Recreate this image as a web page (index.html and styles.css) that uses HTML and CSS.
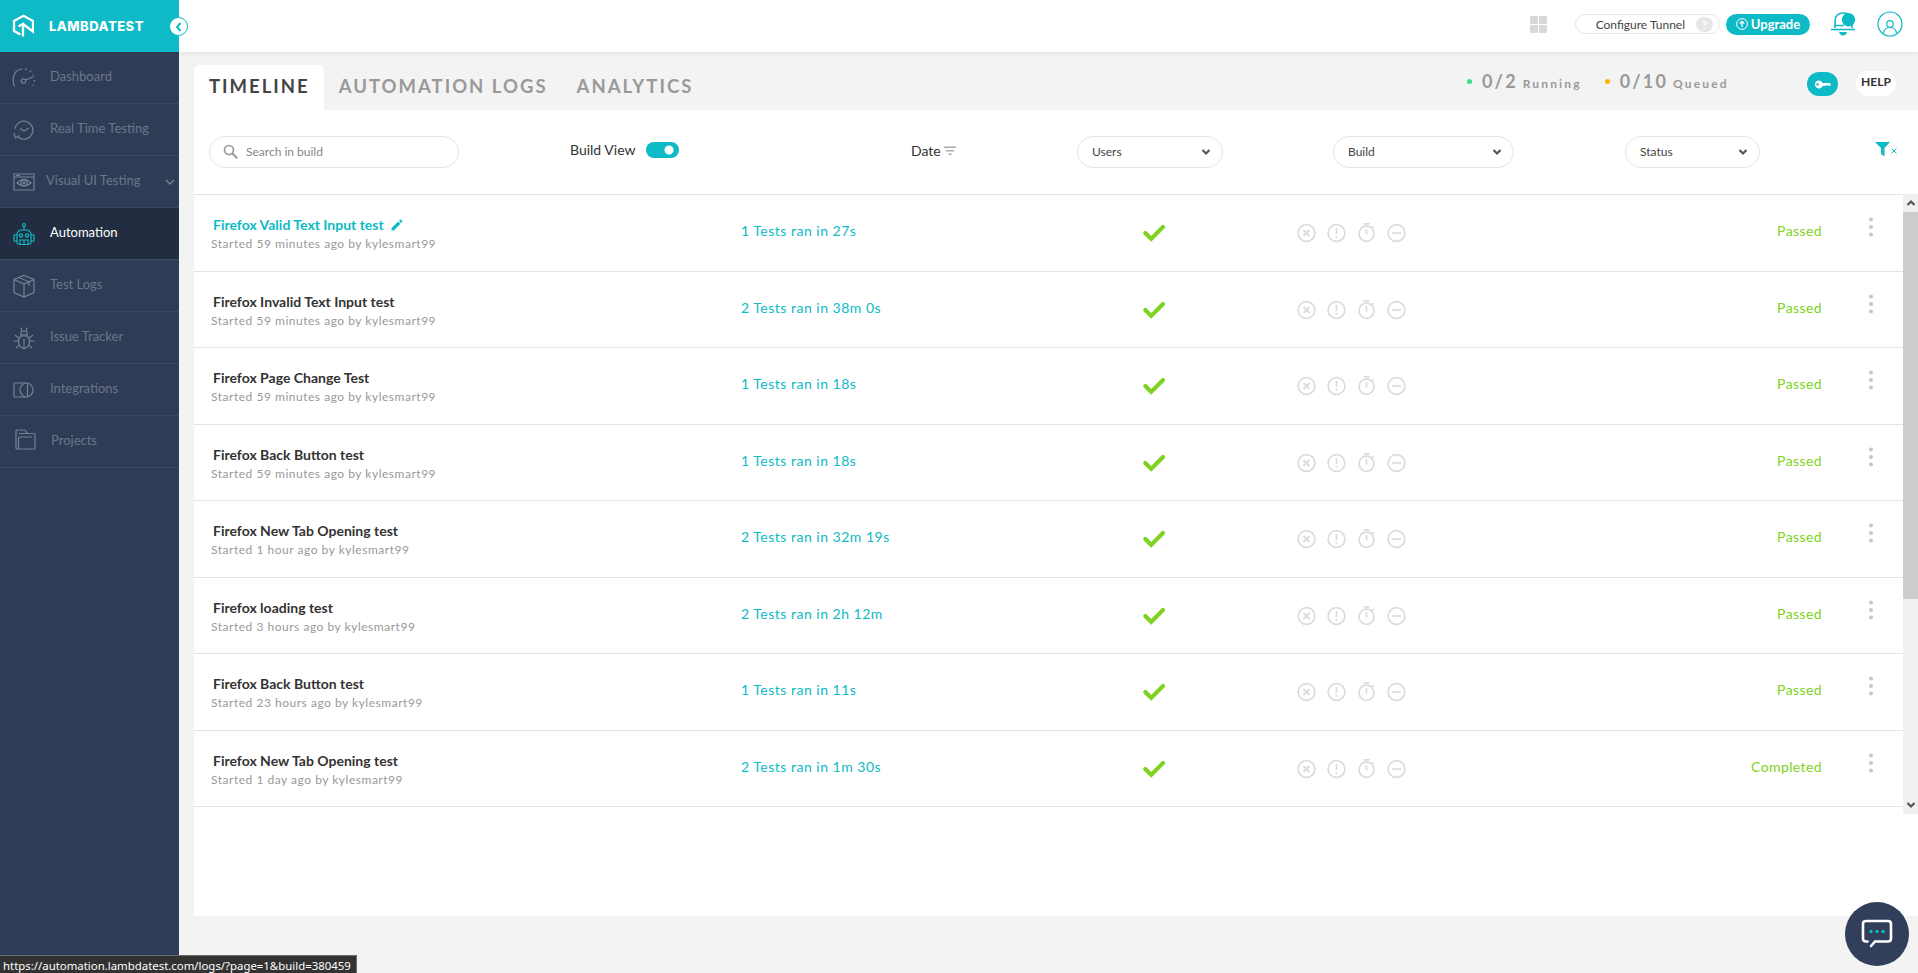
FILE: index.html
```html
<!DOCTYPE html>
<html lang="en">
<head>
<meta charset="utf-8">
<title>Automation Timeline</title>
<link rel="stylesheet" href="styles.css">
</head>
<body>
<svg class="defs" width="0" height="0">
  <symbol id="check" viewBox="0 0 24 20"><path d="M3.300 10l5.900 5.900L21 4.100" fill="none" stroke="#7ed321" stroke-width="4.200" stroke-linecap="round"/></symbol>
  <symbol id="states" viewBox="0 0 110 24"><g fill="none" stroke="#dcdcdc" stroke-width="1.700">
    <circle cx="9.500" cy="13" r="8.400"/><path d="M6.500 10l6 6m0-6l-6 6" stroke-width="2"/>
    <circle cx="39.500" cy="13" r="8.400"/><path d="M39.500 8v6m0 1.700v2"/>
    <ellipse cx="69.500" cy="13.800" rx="7.500" ry="7.600"/><path d="M69.500 9v5.500M66.500 3.800h6M74.500 7.500l2.500-1"/>
    <circle cx="99.500" cy="13" r="8.400"/><path d="M95 13h9"/></g></symbol>
  <symbol id="dots" viewBox="0 0 6 20"><g fill="#c8c8c8"><circle cx="3" cy="2.500" r="2.100"/><circle cx="3" cy="10" r="2.100"/><circle cx="3" cy="17.500" r="2.100"/></g></symbol>
  <symbol id="chev" viewBox="0 0 10 8"><path d="M1.500 2L5 5.500 8.500 2" fill="none" stroke="#555" stroke-width="2.200"/></symbol>
</svg>
<div class="app">
  <aside class="sidebar">
    <div class="brand">
      <svg width="22" height="24" viewBox="0 0 22 24" fill="none" stroke="#fff" stroke-width="2.300"><path d="M8.500 20.500L2 17V7L11.500 1.800 21 7v10.500L11 10M6.500 12.500L11 10v12.500"/></svg>
      <span>LAMBDATEST</span>
      <div class="collapse"><svg width="10" height="12" viewBox="0 0 10 12"><path d="M6.500 2L3 6l3.500 4" fill="none" stroke="#0ebac5" stroke-width="2"/></svg></div>
    </div>
    <nav>
      <a class="item"><svg width="24" height="24" viewBox="0 0 24 24"><path d="M2.500 20.500C-1 11 3 3 10.500 3" /><circle cx="11.500" cy="15" r="2.200"/><path d="M13.500 14L22 10.500"/><path d="M13 3.200c4 .5 7 3 8.500 6M22.500 14c0 2-.5 4-1.500 6" stroke-dasharray="2 2.800"/></svg><span>Dashboard</span></a>
      <a class="item"><svg width="24" height="24" viewBox="0 0 24 24"><path d="M3 11a9 9 0 1 1 3 8M2 15l1.500 5 4-2.500M8 10.500l4 2.500 5-3"/></svg><span>Real Time Testing</span></a>
      <a class="item visual"><svg width="24" height="24" viewBox="0 0 24 24"><path d="M2 4h20v16H2zM2 7h20M4 5.500h4M5 13q7-7 14 0q-7 6-14 0z"/><circle cx="12" cy="13" r="3"/><circle cx="12" cy="13" r=".8"/></svg><span>Visual UI Testing</span><svg class="more" width="10" height="8" viewBox="0 0 10 8"><path d="M1 2l4 4 4-4"/></svg></a>
      <a class="item active"><svg width="24" height="24" viewBox="0 0 24 24"><circle cx="12" cy="3" r="1.500"/><path d="M12 4.500V8M5 21V12q1-4 5-4h4q4 0 5 4v9q-1 1.500-3 1.500H8Q6 22.500 5 21zM5 13H2v6h3M19 13h3v6h-3M8 22v-4h8v4M12 18v4"/><circle cx="9" cy="13.500" r="1.600"/><circle cx="15" cy="13.500" r="1.600"/></svg><span>Automation</span></a>
      <a class="item"><svg width="24" height="24" viewBox="0 0 24 24"><path d="M12 1.500L22 5.500v13L12 23 2 18.500v-13zM2 5.500L12 10l10-4.500M12 10v13M7 3.500l10 4.300v4"/></svg><span>Test Logs</span></a>
      <a class="item"><svg width="24" height="24" viewBox="0 0 24 24"><ellipse cx="12" cy="15.500" rx="5.500" ry="7"/><path d="M12 13v9.500M9 9Q8 5 12 5t3 4M10 5L9 1.500M14 5l1-3.500M6.500 12L3 9M17.500 12L21 9M6.500 15H1.500M17.500 15h5M7.500 19L4 22M16.500 19l3.500 3M8 10h8"/></svg><span>Issue Tracker</span></a>
      <a class="item"><svg width="24" height="24" viewBox="0 0 24 24"><path d="M14 5H3q-1 0-1 1v12q0 1 1 1h11"/><ellipse cx="14.500" cy="12" rx="6.500" ry="7"/><path d="M15.500 5v14"/></svg><span>Integrations</span></a>
      <a class="item projects"><svg width="24" height="24" viewBox="0 0 24 24"><path d="M5.500 21H4q-1 0-1-1V3q0-1 1-1h7q2 0 3 3.500h7q1 0 1 1V20q0 1-1 1H5.500V10.500q0-1.500 1.500-1.500h12M6 5.500h8"/></svg><span>Projects</span></a>
    </nav>
  </aside>
  <div class="page">
    <header class="topbar">
      <svg class="grid" width="17" height="17" viewBox="0 0 17 17" fill="#d8d8d8"><rect width="8" height="8" rx="1"/><rect x="9" width="8" height="8" rx="1"/><rect y="9" width="8" height="8" rx="1"/><rect x="9" y="9" width="8" height="8" rx="1"/></svg>
      <div class="tunnel"><span>Configure Tunnel</span><b>?</b></div>
      <div class="upgrade"><svg width="12" height="12" viewBox="0 0 12 12" fill="none" stroke="#fff"><circle cx="6" cy="6" r="5.400"/><path d="M6 9V3.500M3.800 5.500L6 3.300l2.200 2.200" stroke-width="1.300"/></svg>Upgrade</div>
      <svg class="bell" width="26" height="26" viewBox="0 0 26 26"><path d="M5 17V10q0-8 9-8 8 0 8 8v7M5 14.500h9M1 18.500h24" fill="none" stroke="#0ebac5" stroke-width="1.600"/><circle cx="18.500" cy="8.800" r="6.700" fill="#0ebac5"/><path d="M9 21h8q-1 3.500-4 3.500T9 21z" fill="#0ebac5"/></svg>
      <svg class="user" width="26" height="26" viewBox="0 0 26 26" fill="none" stroke="#0ebac5" stroke-width="1.200"><circle cx="13" cy="13" r="12"/><circle cx="13" cy="13" r="3.300"/><path d="M6.500 22.500q.5-6 6.500-6t6.500 6"/></svg>
    </header>
    <div class="tabs">
      <a class="tab current">TIMELINE</a><a class="tab">AUTOMATION LOGS</a><a class="tab">ANALYTICS</a>
      <div class="usage"><i class="green"></i><strong>0/2</strong><em>Running</em><i class="amber"></i><strong>0/10</strong><em>Queued</em></div>
      <div class="key"><svg width="16" height="9" viewBox="0 0 16 9"><path fill-rule="evenodd" fill="#fff" d="M4 .5a4 4 0 1 0 3.600 5.500H10l1-1 1 1 1-1 1 1h1l.8-1.500-.8-1.500H7.600A4 4 0 0 0 4 .5zM2.600 3.300a1.200 1.200 0 1 1 0 2.400 1.200 1.200 0 0 1 0-2.400z"/></svg></div>
      <div class="help">HELP</div>
    </div>
    <main class="panel">
      <div class="filters">
        <div class="search"><svg width="16" height="16" viewBox="0 0 16 16" fill="none" stroke="#999" stroke-width="1.700"><circle cx="6" cy="6" r="4.500"/><path d="M9.200 9.200l5 5" stroke-width="2"/></svg><span>Search in build</span></div>
        <div class="view"><span>Build View</span><div class="toggle"></div></div>
        <div class="date"><span>Date</span><svg width="12" height="9" viewBox="0 0 12 9" fill="#aaa"><path d="M0 .5h12V2H0zM2 4h8v1.500H2zM4.500 7.500h3V9h-3z"/></svg></div>
        <div class="select users">Users<svg width="10" height="8"><use href="#chev"/></svg></div>
        <div class="select build">Build<svg width="10" height="8"><use href="#chev"/></svg></div>
        <div class="select status">Status<svg width="10" height="8"><use href="#chev"/></svg></div>
        <svg class="clear" width="24" height="15" viewBox="0 0 24 15"><path d="M0 0h15L9.500 6v8.500L6 12V6z" fill="#0ebac5"/><path d="M16.500 6.500l5 5m0-5l-5 5" stroke="#0ebac5"/></svg>
      </div>
      <div class="list">
        <div class="rows">
          <div class="row"><div class="name"><b class="hover">Firefox Valid Text Input test<svg width="12" height="12" viewBox="0 0 12 12" fill="#0ebac5"><path d="M.5 9.200L7.200 2.500l2.300 2.300L2.800 11.500H.5zM8 1.700L9.500.3l2.200 2.200-1.400 1.500z"/></svg></b><small>Started 59 minutes ago by kylesmart99</small></div><span class="ran">1 Tests ran in 27s</span><svg class="ok" width="24" height="20"><use href="#check"/></svg><svg class="states" width="110" height="24"><use href="#states"/></svg><span class="result">Passed</span><svg class="dots" width="6" height="20"><use href="#dots"/></svg></div>
          <div class="row"><div class="name"><b>Firefox Invalid Text Input test</b><small>Started 59 minutes ago by kylesmart99</small></div><span class="ran">2 Tests ran in 38m 0s</span><svg class="ok" width="24" height="20"><use href="#check"/></svg><svg class="states" width="110" height="24"><use href="#states"/></svg><span class="result">Passed</span><svg class="dots" width="6" height="20"><use href="#dots"/></svg></div>
          <div class="row"><div class="name"><b>Firefox Page Change Test</b><small>Started 59 minutes ago by kylesmart99</small></div><span class="ran">1 Tests ran in 18s</span><svg class="ok" width="24" height="20"><use href="#check"/></svg><svg class="states" width="110" height="24"><use href="#states"/></svg><span class="result">Passed</span><svg class="dots" width="6" height="20"><use href="#dots"/></svg></div>
          <div class="row"><div class="name"><b>Firefox Back Button test</b><small>Started 59 minutes ago by kylesmart99</small></div><span class="ran">1 Tests ran in 18s</span><svg class="ok" width="24" height="20"><use href="#check"/></svg><svg class="states" width="110" height="24"><use href="#states"/></svg><span class="result">Passed</span><svg class="dots" width="6" height="20"><use href="#dots"/></svg></div>
          <div class="row"><div class="name"><b>Firefox New Tab Opening test</b><small>Started 1 hour ago by kylesmart99</small></div><span class="ran">2 Tests ran in 32m 19s</span><svg class="ok" width="24" height="20"><use href="#check"/></svg><svg class="states" width="110" height="24"><use href="#states"/></svg><span class="result">Passed</span><svg class="dots" width="6" height="20"><use href="#dots"/></svg></div>
          <div class="row"><div class="name"><b>Firefox loading test</b><small>Started 3 hours ago by kylesmart99</small></div><span class="ran">2 Tests ran in 2h 12m</span><svg class="ok" width="24" height="20"><use href="#check"/></svg><svg class="states" width="110" height="24"><use href="#states"/></svg><span class="result">Passed</span><svg class="dots" width="6" height="20"><use href="#dots"/></svg></div>
          <div class="row"><div class="name"><b>Firefox Back Button test</b><small>Started 23 hours ago by kylesmart99</small></div><span class="ran">1 Tests ran in 11s</span><svg class="ok" width="24" height="20"><use href="#check"/></svg><svg class="states" width="110" height="24"><use href="#states"/></svg><span class="result">Passed</span><svg class="dots" width="6" height="20"><use href="#dots"/></svg></div>
          <div class="row"><div class="name"><b>Firefox New Tab Opening test</b><small>Started 1 day ago by kylesmart99</small></div><span class="ran">2 Tests ran in 1m 30s</span><svg class="ok" width="24" height="20"><use href="#check"/></svg><svg class="states" width="110" height="24"><use href="#states"/></svg><span class="result">Completed</span><svg class="dots" width="6" height="20"><use href="#dots"/></svg></div>
        </div>
        <div class="scroll"><svg class="up" width="10" height="8"><use href="#chev"/></svg><div class="thumb"></div><svg width="10" height="8"><use href="#chev"/></svg></div>
      </div>
    </main>
  </div>
</div>
<div class="chat"><svg width="32" height="30" viewBox="0 0 32 30"><path d="M6.500 22.500H5Q2 22.500 2 19.500V5q0-3 3-3h22q3 0 3 3v14.500q0 3-3 3H14L10 27" fill="none" stroke="#fff" stroke-width="2.600" stroke-linecap="round"/><g fill="#0ebac5"><circle cx="10" cy="12.500" r="1.700"/><circle cx="16" cy="12.500" r="1.700"/><circle cx="22" cy="12.500" r="1.700"/></g></svg></div>
<div class="url">https://automation.lambdatest.com/logs/?page=1&amp;build=380459</div>
</body>
</html>
```
FILE: styles.css
```css
* { box-sizing: border-box; }
body { margin: 0; height: 973px; overflow: hidden; font-family: Lato, sans-serif; color: #333; background: #f3f3f3; }
svg { display: block; flex: none; }
.defs { position: absolute; }
.app { display: flex; height: 973px; }

.sidebar { width: 179px; flex: none; background: #2e3c56; }
.brand { position: relative; z-index: 2; height: 52px; background: #0ebac5; display: flex; align-items: center; padding-left: 12px; gap: 15px; color: #fff; font: 800 13px Inter, sans-serif; letter-spacing: 0.500px; }
.collapse { position: absolute; left: 169px; top: 17px; width: 19px; height: 19px; border-radius: 50%; background: #fff; border: 1px solid #0ebac5; display: grid; place-items: center; }
.item { display: flex; align-items: center; height: 52px; border-bottom: 1px solid #3d4a63; padding: 0 4px 0 12px; color: #6c7689; font-size: 13px; }
.item span { margin: -4px 0 0 14px; }
.item > svg { fill: none; stroke: #768093; stroke-width: 1.200; }
.item.active { background: #232d41; color: #fff; }
.item.active > svg { stroke: #0ebac5; }
.item.visual span { margin-left: 10px; }
.item .more { margin-left: auto; stroke-width: 1.500; }
.item.projects { padding-left: 13px; }
.projects svg { margin-top: -4px; }

.page { flex: 1; min-width: 0; }
.topbar { position: relative; height: 52px; background: #fff; display: flex; align-items: center; box-shadow: 0 1px 5px rgba(0,0,0,.08); padding: 0 15px 4px 1351px; }
.tunnel { margin-left: 28px; width: 145px; height: 20px; border: 1px solid #e6e6e6; border-radius: 10px; display: flex; align-items: center; justify-content: flex-end; gap: 11px; padding-right: 6px; font-size: 12px; color: #444; }
.tunnel b { width: 17px; height: 15px; border-radius: 8px; background: #e6e6e6; color: #fff; text-align: center; line-height: 15px; font-size: 12px; }
.upgrade { margin-left: 6px; width: 84px; height: 21px; border-radius: 11px; background: #0ebac5; color: #fff; font-size: 13px; font-weight: 700; display: flex; align-items: center; justify-content: center; gap: 3px; padding-bottom: 1px; }
.bell { margin-left: 20px; }
.user { margin-left: auto; }

.tabs { height: 58px; padding: 13px 22px 0 15px; display: flex; }
.tab { height: 45px; padding: 0 14px 0 15px; font-size: 18.500px; font-weight: 700; line-height: 43px; letter-spacing: 2px; color: #999; }
.tab.current { background: #fff; color: #444; border-radius: 5px 5px 0 0; }
.usage { margin-left: auto; display: flex; align-items: baseline; height: 34px; line-height: 32px; color: #999; letter-spacing: 2.150px; width: 265px; }
.usage i { width: 5px; height: 5px; border-radius: 50%; align-self: center; margin-top: -2px; }
.green { background: #35e28c; }
.amber { background: #ffb400; margin-left: 23px; }
.usage strong { font-size: 18px; margin: 0 5px 0 10px; }
.usage em { font-style: normal; font-weight: 700; font-size: 12px; }
.key { width: 31px; height: 24px; border-radius: 12px; background: #0ebac5; display: grid; place-items: center; margin: 7px 0 0 75px; }
.help { width: 40px; height: 25px; border-radius: 13px; background: #fff; margin: 6px 0 0 18px; text-align: center; line-height: 22px; font-size: 12px; font-weight: 700; }

.panel { margin-left: 15px; height: 806px; background: #fff; }
.filters { height: 84px; padding: 26px 0 0 15px; display: flex; }
.search { width: 250px; height: 32px; border: 1px solid #e6e6e6; border-radius: 16px; display: flex; align-items: center; gap: 7px; padding: 0 0 1px 13px; font-size: 12px; color: #888; }
.view { width: 341px; margin-left: 111px; display: flex; align-items: center; height: 28px; gap: 11px; font-size: 14px; }
.view span { margin-top: -1px; }
.toggle { width: 33px; height: 16px; border-radius: 8px; background: radial-gradient(circle at 23px 8px, #fff 4px, #0ebac5 5px); }
.date { width: 166px; height: 29px; display: flex; align-items: center; gap: 3px; font-size: 14px; }
.select { height: 32px; border: 1px solid #e6e6e6; border-radius: 16px; display: flex; align-items: center; justify-content: space-between; padding: 0 11px 1px 14px; font-size: 12px; color: #444; }
.users { width: 146px; }
.build { width: 181px; margin-left: 110px; }
.status { width: 135px; margin-left: 111px; }
.clear { margin: 6px 0 0 115px; }
.list { display: flex; height: 620px; }
.rows { flex: 1; border-top: 1px solid #e4e4e4; }
.row { display: flex; height: 76.500px; border-bottom: 1px solid #e4e4e4; }
.name { width: 528px; padding: 21.400px 0 0 17px; }
.name b { display: flex; gap: 7px; align-items: center; font-size: 14px; line-height: 18px; padding-left: 2px; }
.name .hover { color: #0ebac5; }
.name small { display: block; font-size: 12px; line-height: 20px; color: #999; letter-spacing: .52px; }
.ran { width: 420px; padding: 26.400px 0 0 19px; font-size: 14px; line-height: 20px; letter-spacing: .5px; color: #0ebac5; }
.ok { margin-top: 28px; }
.states { margin: 25px 0 0 131px; }
.result { width: 415px; padding-top: 26.400px; text-align: right; font-size: 14px; line-height: 20px; letter-spacing: .4px; color: #7ed321; }
.dots { margin: 22px 0 0 46px; }
.scroll { width: 15px; background: #f0f0f0; display: flex; flex-direction: column; align-items: center; padding: 5px 0; }
.scroll .up { transform: rotate(180deg); margin-bottom: 5px; }
.thumb { width: 15px; height: 387px; background: #cdcdcd; margin-bottom: auto; }

.chat { position: absolute; left: 1845px; top: 902px; width: 64px; height: 64px; border-radius: 50%; background: #313f5a; display: grid; place-items: center; }
.url { position: absolute; left: 0; bottom: 0; width: 357px; height: 18px; padding-left: 3px; background: #323232; border: solid #6b6b6b; border-width: 1px 1px 0 0; color: #fff; font: 11.400px/20px "Noto Sans", sans-serif; white-space: nowrap; }
```
